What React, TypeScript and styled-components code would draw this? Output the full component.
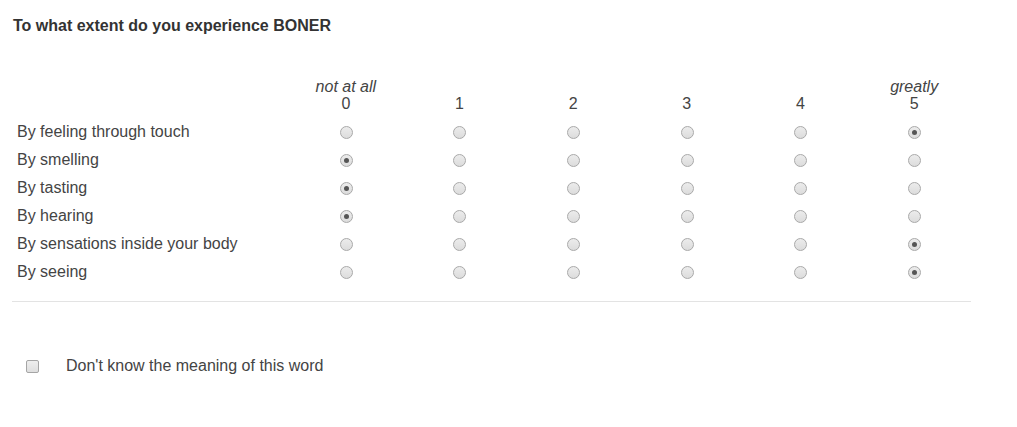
import React from "react";
import styled, { createGlobalStyle } from "styled-components";

const Global = createGlobalStyle`
  html, body { margin: 0; padding: 0; background: #fff; }
  body { font-family: "Liberation Sans", Arial, sans-serif; color: #444; }
`;

const Page = styled.div`
  padding: 16px 0 0 12px;
  width: 959px;
`;

const Title = styled.h1`
  margin: 0 0 0 1px;
  font-size: 16px;
  line-height: 20px;
  font-weight: bold;
  color: #333;
`;

const Grid = styled.div`
  margin-top: 42px;
  display: grid;
  grid-template-columns: 277px repeat(6, 1fr);
`;

const HeadCell = styled.div`
  display: flex;
  flex-direction: column;
  align-items: center;
  justify-content: flex-end;
  font-size: 16px;
  line-height: 17px;
  padding-bottom: 6px;
  color: #444;
`;

const Anchor = styled.span`
  font-style: italic;
`;

const Label = styled.div`
  height: 28px;
  display: flex;
  align-items: center;
  padding-left: 5px;
  font-size: 16px;
  color: #444;
`;

const Cell = styled.div`
  height: 28px;
  display: flex;
  align-items: center;
  justify-content: center;
  padding-left: 1px;
`;

const Radio = styled.input.attrs({ type: "radio" })`
  appearance: none;
  -webkit-appearance: none;
  margin: 0;
  width: 13px;
  height: 13px;
  border-radius: 50%;
  border: 1px solid #a9a9a9;
  background: linear-gradient(#ececec, #dcdcdc);
  box-sizing: border-box;
  position: relative;
  &:checked::after {
    content: "";
    position: absolute;
    left: 3px;
    top: 3px;
    width: 5px;
    height: 5px;
    border-radius: 50%;
    background: #555;
  }
`;

const Divider = styled.hr`
  margin: 15px 0 0 0;
  border: 0;
  border-top: 1px solid #e3e3e3;
`;

const CheckRow = styled.label`
  display: flex;
  align-items: center;
  margin: 55px 0 0 14px;
  font-size: 16px;
  color: #444;
  gap: 27px;
`;

const Checkbox = styled.input.attrs({ type: "checkbox" })`
  appearance: none;
  -webkit-appearance: none;
  margin: 0;
  width: 13px;
  height: 13px;
  border-radius: 2px;
  border: 1px solid #a5a5a5;
  background: linear-gradient(#eeeeee, #dedede);
  box-sizing: border-box;
`;

const rows: { label: string; value: number }[] = [
  { label: "By feeling through touch", value: 5 },
  { label: "By smelling", value: 0 },
  { label: "By tasting", value: 0 },
  { label: "By hearing", value: 0 },
  { label: "By sensations inside your body", value: 5 },
  { label: "By seeing", value: 5 },
];

const heads = [
  { anchor: "not at all", n: 0 },
  { anchor: "", n: 1 },
  { anchor: "", n: 2 },
  { anchor: "", n: 3 },
  { anchor: "", n: 4 },
  { anchor: "greatly", n: 5 },
];

export default function App() {
  return (
    <>
      <Global />
      <Page>
        <Title>To what extent do you experience BONER</Title>
        <Grid>
          <div />
          {heads.map((h) => (
            <HeadCell key={h.n}>
              {h.anchor && <Anchor>{h.anchor}</Anchor>}
              <span>{h.n}</span>
            </HeadCell>
          ))}
          {rows.map((r, i) => (
            <React.Fragment key={r.label}>
              <Label>{r.label}</Label>
              {heads.map((h) => (
                <Cell key={h.n}>
                  <Radio name={`q${i}`} defaultChecked={r.value === h.n} />
                </Cell>
              ))}
            </React.Fragment>
          ))}
        </Grid>
        <Divider />
        <CheckRow>
          <Checkbox />
          <span>Don't know the meaning of this word</span>
        </CheckRow>
      </Page>
    </>
  );
}
